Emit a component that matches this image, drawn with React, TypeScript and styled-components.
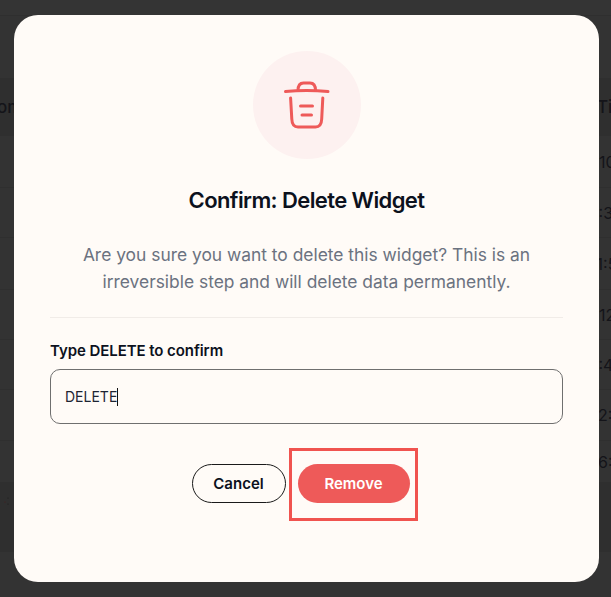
import React from "react";
import styled, { createGlobalStyle } from "styled-components";

const Global = createGlobalStyle`
  html, body { margin: 0; padding: 0; height: 100%; background: #333333; overflow: hidden; }
  body { font-family: Inter, "Liberation Sans", sans-serif; }
  * { box-sizing: border-box; }
`;

const Page = styled.div`
  width: 611px;
  height: 597px;
  overflow: hidden;
  background: #333333;
`;

const TopBar = styled.div`
  height: 16px;
  background: #343434;
  border-bottom: 1px solid #2f2f2f;
`;

const Table = styled.div`
  margin-top: 62px;
  display: flex;
  flex-direction: column;
`;

const Row = styled.div<{ $height: number; $head?: boolean }>`
  height: ${(p) => p.$height}px;
  display: flex;
  justify-content: space-between;
  align-items: center;
  border-bottom: 1px solid #2f2f2f;
  background: ${(p) => (p.$head ? "#2f2f2f" : "#333333")};
  font-size: ${(p) => (p.$head ? 17 : 16)}px;
  font-weight: ${(p) => (p.$head ? 500 : 400)};
  color: #141419;
`;

const LeftCell = styled.span`
  width: 14px;
  margin-left: -3px;
  white-space: nowrap;
`;

const RightCell = styled.span<{ $indent: number }>`
  width: 21px;
  flex: none;
  padding-left: ${(p) => p.$indent}px;
  white-space: nowrap;
  overflow: hidden;
`;

const FooterRow = styled.div`
  height: 69px;
  background: #2f2f2f;
  padding: 8px 0 0 4px;
`;

const Overlay = styled.div`
  position: fixed;
  left: 14px;
  top: 15px;
  width: 585px;
  height: 567px;
  background: #fffbf7;
  border-radius: 24px;
  padding: 36px 36px 0;
  display: flex;
  flex-direction: column;
  align-items: center;
`;

const IconCircle = styled.div`
  width: 108px;
  height: 108px;
  border-radius: 50%;
  background: #fdf1f0;
  display: flex;
  align-items: center;
  justify-content: center;
`;

const Title = styled.h2`
  margin: 27px 0 0;
  font-size: 22px;
  line-height: 28px;
  font-weight: 600;
  letter-spacing: -0.6px;
  color: #0c111d;
`;

const Message = styled.p`
  margin: 27px 0 0;
  font-size: 17.4px;
  line-height: 27px;
  font-weight: 400;
  text-align: center;
  color: #6b7280;
`;

const Divider = styled.hr`
  width: 100%;
  margin: 22px 0 0;
  border: 0;
  border-top: 1px solid #f1ece8;
`;

const Label = styled.label`
  align-self: stretch;
  margin-top: 23px;
  font-size: 15px;
  line-height: 20px;
  font-weight: 600;
  letter-spacing: -0.07px;
  color: #0c111d;
`;

const InputBox = styled.div`
  align-self: stretch;
  margin-top: 8px;
  height: 55px;
  border: 1px solid #6f6f6f;
  border-radius: 10px;
  padding: 0 14px;
  display: flex;
  align-items: center;
  font-size: 14px;
  color: #1d2433;
`;

const Caret = styled.span`
  display: inline-block;
  width: 1px;
  height: 18px;
  background: #111;
`;

const Actions = styled.div`
  margin-top: 40px;
  padding-right: 12px;
  display: flex;
  gap: 12px;
  align-items: center;
`;

const CancelButton = styled.button`
  width: 94px;
  height: 39px;
  border-radius: 20px;
  border: 1px solid #1a1a1a;
  background: transparent;
  font: 600 15px Inter, sans-serif;
  color: #0c111d;
`;

const RemoveWrap = styled.div`
  position: relative;
`;

const RemoveButton = styled.button`
  display: block;
  width: 112px;
  height: 39px;
  border-radius: 20px;
  border: 0;
  background: #ee5a59;
  font: 600 15px Inter, sans-serif;
  color: #fff;
`;

const Highlight = styled.div`
  position: absolute;
  left: -9px;
  top: -16px;
  width: 129px;
  height: 73px;
  border: 3px solid #f0534f;
  pointer-events: none;
`;

const rows: [number, string, number][] = [
  [52, "10", 9],
  [50, "7:3", 0],
  [52, "11:5", 0],
  [50, "12", 9],
  [50, "1:4", 2],
  [51, "2:3", 8],
  [42, "6:2", 8],
];

export default function App() {
  return (
    <Page>
      <Global />
      <TopBar />
      <Table>
        <Row $height={58} $head>
          <LeftCell>om</LeftCell>
          <RightCell $indent={7}>Ti</RightCell>
        </Row>
        {rows.map(([h, r, indent], i) => (
          <Row key={i} $height={h}>
            <LeftCell />
            <RightCell $indent={indent}>{r}</RightCell>
          </Row>
        ))}
        <FooterRow>
          <svg width="8" height="10" viewBox="0 0 8 10" fill="#1c1c1c">
            <circle cx="4" cy="1" r="0.6" />
            <circle cx="1" cy="5" r="0.6" fill="#4a1c1c" />
            <circle cx="4" cy="7" r="0.6" />
          </svg>
        </FooterRow>
      </Table>
      <Overlay>
        <IconCircle>
          <svg width="48" height="48" viewBox="0 0 48 48" fill="none" stroke="#ee5a59" strokeWidth="3" strokeLinecap="round" strokeLinejoin="round">
            <path d="M2.5 10.5 C14 9.4 33 9.4 45 10.5" />
            <path d="M15 9.5 C15 4.5 17 2 20.5 2 H27 C30.5 2 32.5 4.5 32.5 9.5" />
            <path d="M7.6 17 L8.8 38 C9 43.5 11.5 46 15 46 H32.5 C36 46 38.5 43.5 38.7 38 L39.8 17" />
            <path d="M17.5 25 H29.5" />
            <path d="M19 34 H28.5" />
          </svg>
        </IconCircle>
        <Title>Confirm: Delete Widget</Title>
        <Message>
          Are you sure you want to delete this widget? This is an
          <br />
          irreversible step and will delete data permanently.
        </Message>
        <Divider />
        <Label>Type DELETE to confirm</Label>
        <InputBox>
          DELETE
          <Caret />
        </InputBox>
        <Actions>
          <CancelButton>Cancel</CancelButton>
          <RemoveWrap>
            <RemoveButton>Remove</RemoveButton>
            <Highlight />
          </RemoveWrap>
        </Actions>
      </Overlay>
    </Page>
  );
}
